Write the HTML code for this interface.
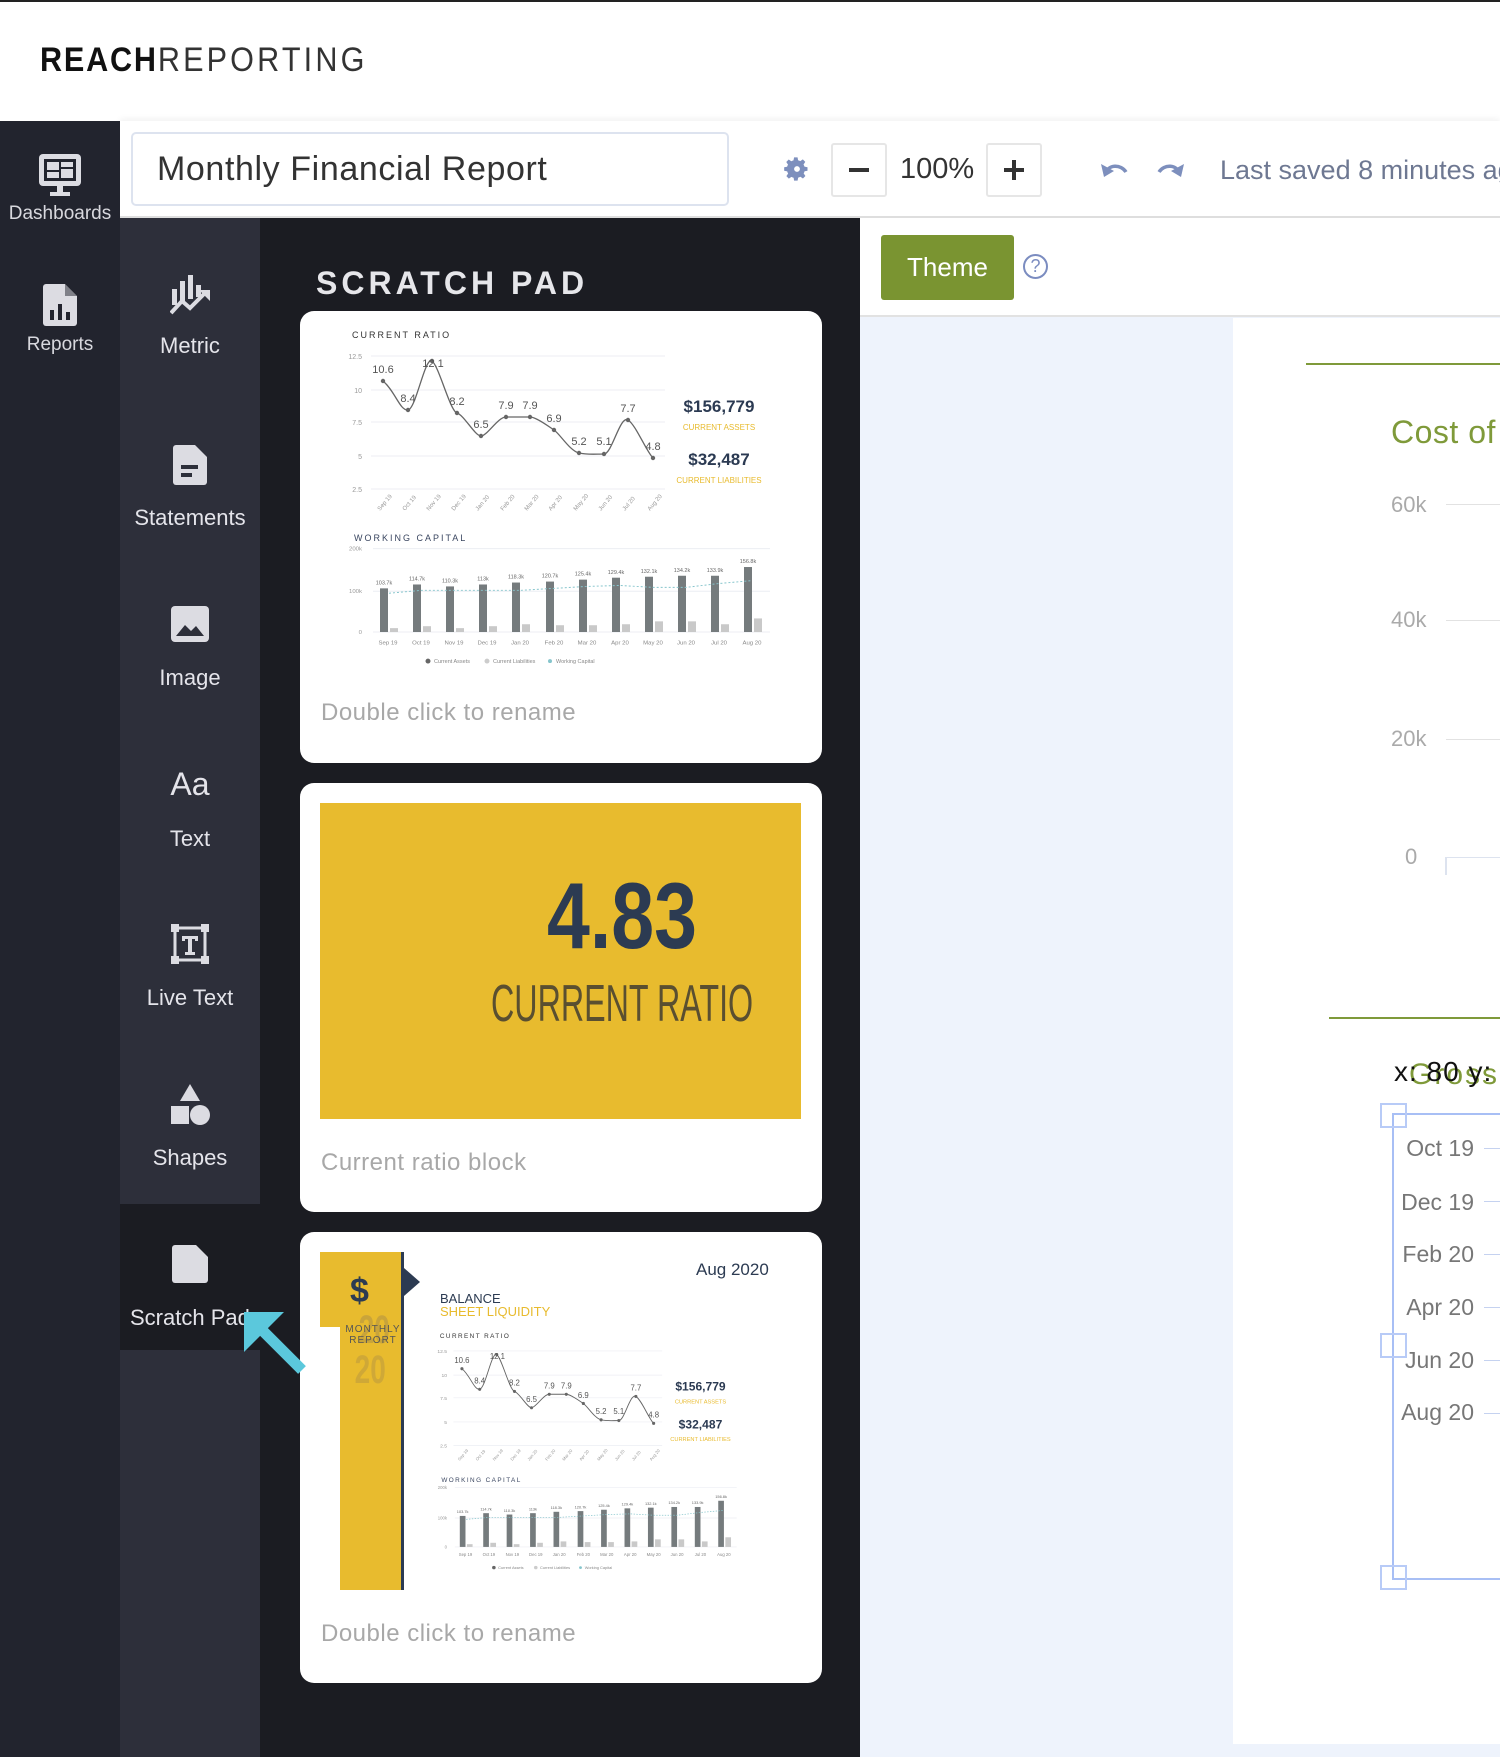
<!DOCTYPE html>
<html><head><meta charset="utf-8"><style>
*{margin:0;padding:0;box-sizing:border-box}
body{width:1500px;height:1757px;position:relative;overflow:hidden;background:#fff;font-family:"Liberation Sans",sans-serif}
.a{position:absolute}
.lbl{position:absolute;width:140px;text-align:center;color:#e4e4ea;font-size:22px}
.l1{width:120px;font-size:19px;color:#d8d8de}
.ic{position:absolute}
.card{position:absolute;left:300px;width:522px;background:#fff;border-radius:14px}
.cap{position:absolute;left:21px;font-size:24px;color:#a8a8a8;letter-spacing:.5px}
.ax{font-family:"Liberation Sans Narrow","Liberation Sans",sans-serif}
.ml{position:absolute;left:1380px;width:94px;text-align:right;font-size:23px;color:#777;line-height:26px}
.tk{position:absolute;left:1484px;width:16px;height:1px;background:#c5d2f0}
</style></head><body>
<div class="a" style="left:0;top:0;width:1500px;height:2px;background:#222"></div>
<div class="a" style="left:40px;top:41px;font-size:34px;color:#111;letter-spacing:2px;transform:scaleX(0.9);transform-origin:left"><b>REACH</b><span style="font-weight:normal;color:#333;letter-spacing:3.5px">REPORTING</span></div>

<!-- toolbar -->
<div class="a" style="left:120px;top:121px;width:1380px;height:97px;background:#fff;box-shadow:0 -2px 6px rgba(0,0,0,.06);border-bottom:2px solid #dedede"></div>
<div class="a" style="left:131px;top:132px;width:598px;height:74px;border:2px solid #dde3ef;border-radius:5px"></div>
<div class="a" style="left:157px;top:150px;font-size:34px;color:#333;letter-spacing:.6px">Monthly Financial Report</div>
<svg class="a" style="left:783px;top:155px" width="28" height="28" viewBox="0 0 24 24"><path fill="#7d8fbd" d="M12 8a4 4 0 100 8 4 4 0 000-8zm9 5.5v-3l-2.6-.5a7 7 0 00-.8-1.9l1.5-2.2-2.1-2.1-2.2 1.5a7 7 0 00-1.9-.8L12.5 2h-3l-.5 2.6a7 7 0 00-1.9.8L4.9 3.9 2.8 6l1.5 2.2a7 7 0 00-.8 1.9L1 10.5v3l2.6.5c.2.7.4 1.3.8 1.9l-1.5 2.2 2.1 2.1 2.2-1.5c.6.4 1.2.6 1.9.8l.4 2.5h3l.5-2.6c.7-.2 1.3-.4 1.9-.8l2.2 1.5 2.1-2.1-1.5-2.2c.4-.6.6-1.2.8-1.9z"/><circle cx="12" cy="12" r="2.5" fill="#fff"/></svg>
<div class="a" style="left:831px;top:143px;width:56px;height:54px;border:2px solid #e6e6e6;border-radius:3px"></div>
<div class="a" style="left:849px;top:168px;width:20px;height:4px;background:#333"></div>
<div class="a" style="left:900px;top:153px;font-size:29px;color:#333">100%</div>
<div class="a" style="left:986px;top:143px;width:56px;height:54px;border:2px solid #e6e6e6;border-radius:3px"></div>
<div class="a" style="left:1004px;top:168px;width:20px;height:4px;background:#333"></div>
<div class="a" style="left:1012px;top:160px;width:4px;height:20px;background:#333"></div>
<svg class="a" style="left:1099px;top:158px" width="30" height="22" viewBox="0 0 30 22"><path d="M6 16C9 6 22 6 27 14" stroke="#7d8fbd" stroke-width="3.5" fill="none"/><path d="M2 6l3 13 10-6z" fill="#7d8fbd"/></svg>
<svg class="a" style="left:1156px;top:158px" width="30" height="22" viewBox="0 0 30 22"><path d="M24 16C21 6 8 6 3 14" stroke="#7d8fbd" stroke-width="3.5" fill="none"/><path d="M28 6l-3 13-10-6z" fill="#7d8fbd"/></svg>
<div class="a" style="left:1220px;top:155px;font-size:27px;color:#6e7892;white-space:nowrap">Last saved 8 minutes ago</div>

<!-- left col 1 -->
<div class="a" style="left:0;top:121px;width:120px;height:1636px;background:#22242e"></div>
<svg class="ic" style="left:37px;top:152px" width="46" height="46" viewBox="0 0 46 46"><rect x="2" y="2" width="42" height="32" rx="4" fill="#dcdce2"/><rect x="7" y="7" width="32" height="22" fill="#22242e"/><rect x="10" y="10" width="12" height="8" fill="#dcdce2"/><rect x="24" y="10" width="12" height="5" fill="#dcdce2"/><rect x="24" y="17" width="12" height="9" fill="#dcdce2"/><rect x="10" y="20" width="12" height="6" fill="#dcdce2"/><rect x="20" y="34" width="6" height="6" fill="#dcdce2"/><rect x="13" y="40" width="20" height="4" fill="#dcdce2"/></svg>
<div class="lbl l1" style="left:0;top:203px">Dashboards</div>
<svg class="ic" style="left:43px;top:284px" width="34" height="42" viewBox="0 0 34 42"><path d="M3 0h19l12 12v27a3 3 0 01-3 3H3a3 3 0 01-3-3V3a3 3 0 013-3z" fill="#dcdce2"/><path d="M22 0v12h12z" fill="#22242e" opacity=".5"/><rect x="7" y="26" width="4" height="10" fill="#22242e"/><rect x="15" y="20" width="4" height="16" fill="#22242e"/><rect x="23" y="28" width="4" height="8" fill="#22242e"/></svg>
<div class="lbl l1" style="left:0;top:334px">Reports</div>

<!-- left col 2 -->
<div class="a" style="left:120px;top:218px;width:140px;height:1539px;background:#2d2f3a"></div>
<div class="a" style="left:120px;top:1204px;width:140px;height:146px;background:#1b1c22"></div>
<svg class="ic" style="left:170px;top:275px" width="42" height="40" viewBox="0 0 42 40"><rect x="2" y="14" width="5" height="16" fill="#dcdce2"/><rect x="10" y="6" width="5" height="20" fill="#dcdce2"/><rect x="18" y="0" width="5" height="24" fill="#dcdce2"/><rect x="26" y="10" width="5" height="12" fill="#dcdce2"/><path d="M1 38l11-12 8 7 14-14" stroke="#dcdce2" stroke-width="4" fill="none"/><path d="M29 15h11v11z" fill="#dcdce2"/></svg>
<div class="lbl" style="left:120px;top:333px">Metric</div>
<svg class="ic" style="left:173px;top:445px" width="34" height="40" viewBox="0 0 34 40"><path d="M3 0h19l12 12v25a3 3 0 01-3 3H3a3 3 0 01-3-3V3a3 3 0 013-3z" fill="#dcdce2"/><rect x="8" y="20" width="17" height="4" fill="#2d2f3a"/><rect x="8" y="28" width="11" height="4" fill="#2d2f3a"/></svg>
<div class="lbl" style="left:120px;top:505px">Statements</div>
<svg class="ic" style="left:171px;top:606px" width="38" height="36" viewBox="0 0 38 36"><rect width="38" height="36" rx="4" fill="#dcdce2"/><path d="M5 30l9-11 6 6 5-5 8 10z" fill="#2d2f3a"/></svg>
<div class="lbl" style="left:120px;top:665px">Image</div>
<div class="lbl" style="left:120px;top:766px;font-size:32px">Aa</div>
<div class="lbl" style="left:120px;top:826px">Text</div>
<svg class="ic" style="left:171px;top:924px" width="38" height="40" viewBox="0 0 38 40"><rect x="4" y="4" width="30" height="32" stroke="#dcdce2" stroke-width="3" fill="none"/><rect x="0" y="0" width="8" height="8" fill="#dcdce2"/><rect x="30" y="0" width="8" height="8" fill="#dcdce2"/><rect x="0" y="32" width="8" height="8" fill="#dcdce2"/><rect x="30" y="32" width="8" height="8" fill="#dcdce2"/><path d="M11 12h16v5h-3v-2h-3v13h3v3H14v-3h3V15h-3v2h-3z" fill="#dcdce2"/></svg>
<div class="lbl" style="left:120px;top:985px">Live Text</div>
<svg class="ic" style="left:170px;top:1084px" width="40" height="42" viewBox="0 0 40 42"><path d="M20 0l10 17H10z" fill="#dcdce2"/><rect x="1" y="22" width="18" height="18" fill="#dcdce2"/><circle cx="30" cy="31" r="10" fill="#dcdce2"/></svg>
<div class="lbl" style="left:120px;top:1145px">Shapes</div>
<svg class="ic" style="left:172px;top:1245px" width="36" height="38" viewBox="0 0 36 38"><path d="M3 0h21l12 12v23a3 3 0 01-3 3H3a3 3 0 01-3-3V3a3 3 0 013-3z" fill="#dcdce2"/></svg>
<div class="a" style="left:130px;top:1305px;font-size:22px;color:#e4e4ea;white-space:nowrap">Scratch Pad</div>

<!-- scratch panel -->
<div class="a" style="left:260px;top:218px;width:600px;height:1539px;background:#1b1c22"></div>
<div class="a" style="left:316px;top:265px;font-size:32px;font-weight:bold;color:#e6e6ea;letter-spacing:4px">SCRATCH PAD</div>

<div class="card" style="top:311px;height:452px">
<svg width="522" height="400" style="position:absolute;left:0;top:0">
<defs><g id="chart">
<text x="52" y="27" font-size="9" letter-spacing="2" fill="#333">CURRENT RATIO</text>
<g stroke="#eceef3" stroke-width="1"><line x1="71" y1="45" x2="365" y2="45"/><line x1="71" y1="79" x2="365" y2="79"/><line x1="71" y1="111" x2="365" y2="111"/><line x1="71" y1="145" x2="365" y2="145"/><line x1="71" y1="178" x2="365" y2="178"/></g>
<g class="ax" font-size="7" fill="#999" text-anchor="end"><text x="62" y="48">12.5</text><text x="62" y="82">10</text><text x="62" y="114">7.5</text><text x="62" y="148">5</text><text x="62" y="181">2.5</text></g>
<path d="M83 70C95 80 100 100 108 99S125 45 132 50S150 100 157 102S175 125 181 125S198 106 206 106S224 106 230 106S248 115 254 119S270 140 279 142S296 143 304 143S320 104 328 109S346 140 353 147" stroke="#666" stroke-width="1.3" fill="none"/>
<g fill="#666"><circle cx="83" cy="70" r="2.2"/><circle cx="108" cy="99" r="2.2"/><circle cx="132" cy="50" r="2.2"/><circle cx="157" cy="102" r="2.2"/><circle cx="181" cy="125" r="2.2"/><circle cx="206" cy="106" r="2.2"/><circle cx="230" cy="106" r="2.2"/><circle cx="254" cy="119" r="2.2"/><circle cx="279" cy="142" r="2.2"/><circle cx="304" cy="143" r="2.2"/><circle cx="328" cy="109" r="2.2"/><circle cx="353" cy="147" r="2.2"/></g>
<g class="ax" font-size="11" fill="#555" text-anchor="middle"><text x="83" y="62">10.6</text><text x="108" y="91">8.4</text><text x="133" y="56">12.1</text><text x="157" y="94">8.2</text><text x="181" y="117">6.5</text><text x="206" y="98">7.9</text><text x="230" y="98">7.9</text><text x="254" y="111">6.9</text><text x="279" y="134">5.2</text><text x="304" y="134">5.1</text><text x="328" y="101">7.7</text><text x="353" y="139">4.8</text></g>
<g class="ax" font-size="6" fill="#999"><text transform="translate(80,200) rotate(-50)">Sep 19</text><text transform="translate(105,200) rotate(-50)">Oct 19</text><text transform="translate(129,200) rotate(-50)">Nov 19</text><text transform="translate(154,200) rotate(-50)">Dec 19</text><text transform="translate(178,200) rotate(-50)">Jan 20</text><text transform="translate(203,200) rotate(-50)">Feb 20</text><text transform="translate(227,200) rotate(-50)">Mar 20</text><text transform="translate(251,200) rotate(-50)">Apr 20</text><text transform="translate(276,200) rotate(-50)">May 20</text><text transform="translate(301,200) rotate(-50)">Jun 20</text><text transform="translate(325,200) rotate(-50)">Jul 20</text><text transform="translate(350,200) rotate(-50)">Aug 20</text></g>
<g text-anchor="middle"><text x="419" y="101" font-size="17" font-weight="bold" fill="#2b3a52">$156,779</text><text x="419" y="119" class="ax" font-size="8" fill="#e8bb2e">CURRENT ASSETS</text><text x="419" y="154" font-size="17" font-weight="bold" fill="#2b3a52">$32,487</text><text x="419" y="172" class="ax" font-size="8" fill="#e8bb2e">CURRENT LIABILITIES</text></g>
<g transform="translate(0,-2) scale(1,0.97)">
<text x="54" y="239" font-size="9" letter-spacing="2" fill="#3a4660">WORKING CAPITAL</text>
<g stroke="#eceef3"><line x1="73" y1="247" x2="470" y2="247"/><line x1="73" y1="291" x2="470" y2="291"/><line x1="73" y1="333" x2="470" y2="333"/></g>
<g class="ax" font-size="6" fill="#999" text-anchor="end"><text x="62" y="249">200k</text><text x="62" y="293">100k</text><text x="62" y="335">0</text></g>
<g fill="#757b7d"><rect x="80" y="288" width="8" height="45"/><rect x="113" y="284" width="8" height="49"/><rect x="146" y="286" width="8" height="47"/><rect x="179" y="284" width="8" height="49"/><rect x="212" y="282" width="8" height="51"/><rect x="246" y="281" width="8" height="52"/><rect x="279" y="279" width="8" height="54"/><rect x="312" y="277" width="8" height="56"/><rect x="345" y="276" width="8" height="57"/><rect x="378" y="275" width="8" height="58"/><rect x="411" y="275" width="8" height="58"/><rect x="444" y="266" width="8" height="67"/></g>
<g fill="#c9c9c9"><rect x="90" y="329" width="8" height="4"/><rect x="123" y="327" width="8" height="6"/><rect x="156" y="329" width="8" height="4"/><rect x="189" y="327" width="8" height="6"/><rect x="222" y="325" width="8" height="8"/><rect x="256" y="326" width="8" height="7"/><rect x="289" y="326" width="8" height="7"/><rect x="322" y="325" width="8" height="8"/><rect x="355" y="322" width="8" height="11"/><rect x="388" y="322" width="8" height="11"/><rect x="421" y="325" width="8" height="8"/><rect x="454" y="319" width="8" height="14"/></g>
<path d="M89 293L122 290L155 290L188 290L221 290L254 288L287 286L320 285L353 287L386 287L419 283L452 280" stroke="#86c5cc" stroke-width="1" stroke-dasharray="2 2" fill="none"/>
<g class="ax" font-size="5.5" fill="#666" text-anchor="middle"><text x="84" y="284">103.7k</text><text x="117" y="280">114.7k</text><text x="150" y="282">110.3k</text><text x="183" y="280">113k</text><text x="216" y="278">118.3k</text><text x="250" y="277">120.7k</text><text x="283" y="275">125.4k</text><text x="316" y="273">129.4k</text><text x="349" y="272">132.1k</text><text x="382" y="271">134.2k</text><text x="415" y="271">133.9k</text><text x="448" y="262">156.8k</text></g>
<g class="ax" font-size="6" fill="#888" text-anchor="middle"><text x="88" y="346">Sep 19</text><text x="121" y="346">Oct 19</text><text x="154" y="346">Nov 19</text><text x="187" y="346">Dec 19</text><text x="220" y="346">Jan 20</text><text x="254" y="346">Feb 20</text><text x="287" y="346">Mar 20</text><text x="320" y="346">Apr 20</text><text x="353" y="346">May 20</text><text x="386" y="346">Jun 20</text><text x="419" y="346">Jul 20</text><text x="452" y="346">Aug 20</text></g>
<g class="ax" font-size="5.5" fill="#888"><circle cx="128" cy="363" r="2.5" fill="#666"/><text x="134" y="365">Current Assets</text><circle cx="187" cy="363" r="2.5" fill="#ccc"/><text x="193" y="365">Current Liabilities</text><circle cx="250" cy="363" r="2" fill="#86c5cc"/><text x="256" y="365">Working Capital</text></g>
</g>
</g></defs>
<use href="#chart"/>
</svg>
<div class="cap" style="top:388px">Double click to rename</div>
</div>

<div class="card" style="top:783px;height:429px">
<div class="a" style="left:20px;top:20px;width:481px;height:316px;background:#e8bb2e"></div>
<div class="a" style="left:247px;top:86px;font-size:94px;font-weight:bold;color:#2c3b52;transform:scaleX(0.82);transform-origin:left;line-height:1;white-space:nowrap">4.83</div>
<div class="a" style="left:191px;top:195px;font-size:52px;color:#5a4f30;transform:scaleX(0.62);transform-origin:left;line-height:1;white-space:nowrap">CURRENT RATIO</div>
<div class="cap" style="top:366px">Current ratio block</div>
</div>

<div class="card" style="top:1232px;height:451px">
<div class="a" style="left:20px;top:20px;width:81px;height:75px;background:#e8bb2e"></div>
<div class="a" style="left:40px;top:95px;width:61px;height:263px;background:#e8bb2e"></div>
<div class="a" style="left:101px;top:20px;width:3px;height:338px;background:#2c3b52"></div>
<svg class="a" style="left:104px;top:36px" width="16" height="28"><path d="M0 0l16 14L0 28z" fill="#2c3b52"/></svg>
<div class="a" style="left:50px;top:42px;font-size:34px;font-weight:bold;color:#2c3b52;line-height:1">$</div>
<div class="a" style="left:52px;top:78px;font-size:40px;font-weight:bold;color:#c9a43a;line-height:1;transform:scaleX(.7)">20</div>
<div class="a" style="left:45px;top:92px;font-size:10px;color:#555;letter-spacing:1px;text-align:center;width:56px;line-height:11px">MONTHLY REPORT</div>
<div class="a" style="left:48px;top:118px;font-size:40px;font-weight:bold;color:#c9a43a;line-height:1;transform:scaleX(.7);opacity:.8">20</div>
<div class="a" style="left:396px;top:28px;font-size:17px;color:#2c3b52">Aug 2020</div>
<div class="a" style="left:140px;top:60px;font-size:13px;color:#2c3b52;line-height:13px">BALANCE<br><span style="color:#e8bb2e">SHEET LIQUIDITY</span></div>
<svg width="522" height="380" style="position:absolute;left:0;top:0"><use href="#chart" transform="translate(103,87) scale(0.71)"/></svg>
<div class="cap" style="top:388px">Double click to rename</div>
</div>

<!-- handle -->
<div class="a" style="left:855px;top:1036px;width:44px;height:340px;background:#1b1c22;border-radius:0 22px 22px 0"></div>
<svg class="a" style="left:873px;top:1198px" width="12" height="18"><path d="M9 2L3 9l6 7" stroke="#aaa" stroke-width="2" fill="none"/></svg>

<!-- right -->
<div class="a" style="left:860px;top:218px;width:640px;height:99px;background:#fff;border-bottom:2px solid #e2e2e2"></div>
<div class="a" style="left:881px;top:235px;width:133px;height:65px;background:#7a9431;border-radius:3px;color:#fff;font-size:26px;text-align:center;line-height:65px">Theme</div>
<div class="a" style="left:1023px;top:254px;width:25px;height:25px;border:2px solid #7b8cc0;border-radius:50%;color:#7b8cc0;font-size:18px;text-align:center;line-height:21px">?</div>
<div class="a" style="left:860px;top:317px;width:640px;height:1440px;background:#eef3fc"></div>
<div class="a" style="left:1233px;top:318px;width:267px;height:1426px;background:#fff"></div>
<div class="a" style="left:1306px;top:363px;width:194px;height:2px;background:#7f9a3a"></div>
<div class="a" style="left:1391px;top:414px;font-size:32px;color:#7f9a3a;letter-spacing:.5px;white-space:nowrap">Cost of</div>
<div class="ax a" style="left:1391px;top:492px;font-size:22px;color:#aaa;line-height:26px">60k</div>
<div class="ax a" style="left:1391px;top:607px;font-size:22px;color:#aaa;line-height:26px">40k</div>
<div class="ax a" style="left:1391px;top:726px;font-size:22px;color:#aaa;line-height:26px">20k</div>
<div class="ax a" style="left:1405px;top:844px;font-size:22px;color:#aaa;line-height:26px">0</div>
<div class="a" style="left:1446px;top:504px;width:54px;height:1px;background:#e2e2e2"></div>
<div class="a" style="left:1446px;top:620px;width:54px;height:1px;background:#e2e2e2"></div>
<div class="a" style="left:1446px;top:739px;width:54px;height:1px;background:#e2e2e2"></div>
<div class="a" style="left:1446px;top:857px;width:54px;height:1px;background:#dde3ef"></div>
<div class="a" style="left:1445px;top:857px;width:2px;height:18px;background:#dde3ef"></div>
<div class="a" style="left:1329px;top:1017px;width:171px;height:2px;background:#7f9a3a"></div>
<div class="a" style="left:1409px;top:1058px;font-size:30px;color:#7f9a3a;letter-spacing:2px;white-space:nowrap">Gross</div>
<div class="a" style="left:1394px;top:1056px;font-size:28px;color:#111;letter-spacing:1px;white-space:nowrap">x: 80 y: 7</div>
<div class="a" style="left:1392px;top:1113px;width:120px;height:467px;border:2px solid #a8bff5;border-right:none"></div>
<div class="a" style="left:1380px;top:1103px;width:27px;height:25px;border:2px solid #b8cbf7"></div>
<div class="a" style="left:1380px;top:1333px;width:27px;height:25px;border:2px solid #b8cbf7"></div>
<div class="a" style="left:1380px;top:1565px;width:27px;height:25px;border:2px solid #b8cbf7"></div>
<div class="ml" style="top:1135px">Oct 19</div>
<div class="ml" style="top:1189px">Dec 19</div>
<div class="ml" style="top:1241px">Feb 20</div>
<div class="ml" style="top:1294px">Apr 20</div>
<div class="ml" style="top:1347px">Jun 20</div>
<div class="ml" style="top:1399px">Aug 20</div>
<div class="tk" style="top:1148px"></div><div class="tk" style="top:1201px"></div><div class="tk" style="top:1254px"></div><div class="tk" style="top:1307px"></div><div class="tk" style="top:1360px"></div><div class="tk" style="top:1413px"></div>

<svg class="a" style="left:240px;top:1308px" width="70" height="70" viewBox="0 0 70 70"><path d="M62 62L14 14" stroke="#5bc8dc" stroke-width="11" fill="none"/><path d="M4 4h40L4 44z" fill="#5bc8dc"/></svg>
</body></html>
